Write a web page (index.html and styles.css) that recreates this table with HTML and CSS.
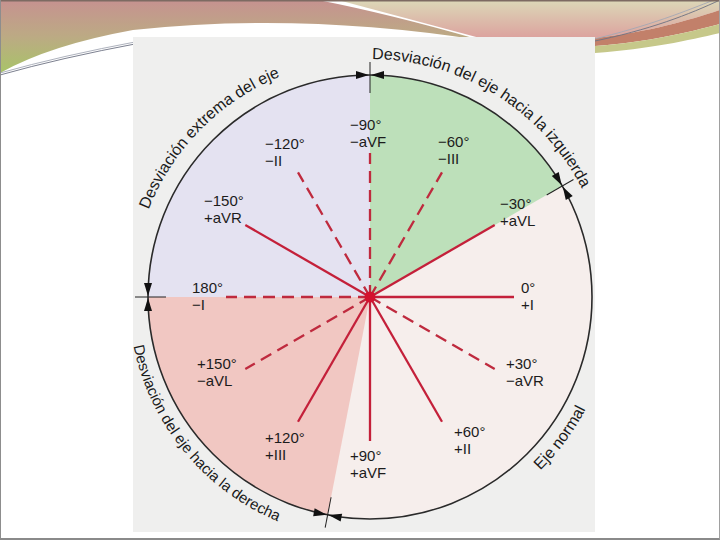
FILE: index.html
```html
<!DOCTYPE html>
<html lang="es">
<head>
<meta charset="utf-8">
<title>Eje eléctrico</title>
<link rel="stylesheet" href="styles.css">
</head>
<body>
<div class="slide">
  <svg class="deco" width="720" height="80" viewBox="0 0 720 80" aria-hidden="true">
    <defs>
      <linearGradient id="gl" x1="0" y1="0" x2="0" y2="1">
        <stop offset="0" stop-color="#c69290"/>
        <stop offset="0.5" stop-color="#bcaa84"/>
        <stop offset="1" stop-color="#a8c468"/>
      </linearGradient>
      <linearGradient id="gr" x1="0" y1="0" x2="0" y2="1">
        <stop offset="0" stop-color="#dcd8b8"/>
        <stop offset="1" stop-color="#dca29e"/>
      </linearGradient>
    </defs>
    <path class="band-left" d="M0,0 H318 Q390,14 480,40 Q300,12 133,30 Q50,45 0,73 Z"/>
    <path class="band-right" d="M338,0 H720 V10 C690,20 650,32 595,38 L480,38 Z"/>
    <path class="band-brown" d="M595,38 C650,32 690,20 720,10 V24 C690,32 650,42 595,46 Z"/>
    <path class="band-green" d="M595,46 C650,42 690,32 720,24 V33 C690,40 650,49 595,53 Z"/>
    <path class="thin dark" d="M590,42 C650,30 690,14 720,0"/>
    <path class="thin light" d="M590,40 C650,26 688,10 714,0"/>
    <path class="thin dark" d="M0,75 Q60,58 140,43"/>
    <path class="thin light" d="M0,73 Q60,56 140,41"/>
    <rect class="topline" x="0" y="0" width="720" height="1.5"/>
  </svg>

  <div class="figure">
    <svg width="462" height="495" viewBox="133 37 462 495">
      <defs>
        <path id="arc1" d="M372.08,59 A238,238 0 0 1 593.65,215.6"/>
        <path id="arc2" d="M148.56,209.77 A238,238 0 0 1 328.67,62.62"/>
        <path id="arc3" d="M133.5,346 A243,243 0 0 0 348.82,539.08"/>
        <path id="arc4" d="M540.32,470.32 A243,243 0 0 0 603.6,364"/>
      </defs>
      <rect class="bg" x="133" y="37" width="462" height="495"/>

      <circle class="sec-pale" cx="370" cy="297" r="222"/>
      <path class="sec-lav" d="M370,297 L148,297 A222,222 0 0 1 370,75 Z"/>
      <path class="sec-green" d="M370,297 L370,75 A222,222 0 0 1 562.26,186 Z"/>
      <path class="sec-pink" d="M370,297 L327.64,514.92 A222,222 0 0 1 148,297 Z"/>
      <circle class="ring" cx="370" cy="297" r="222"/>

      <g class="solid">
        <line x1="370" y1="297" x2="514" y2="297"/>
        <line x1="370" y1="297" x2="442" y2="421.7"/>
        <line x1="370" y1="297" x2="370" y2="441"/>
        <line x1="370" y1="297" x2="298" y2="421.7"/>
        <line x1="370" y1="297" x2="245.3" y2="225"/>
        <line x1="370" y1="297" x2="494.7" y2="225"/>
      </g>
      <g class="dashed">
        <line x1="370" y1="297" x2="494.7" y2="369"/>
        <line x1="370" y1="297" x2="245.3" y2="369"/>
        <line x1="370" y1="297" x2="226" y2="297"/>
        <line x1="370" y1="297" x2="298" y2="172.3"/>
        <line x1="370" y1="297" x2="370" y2="153"/>
        <line x1="370" y1="297" x2="442" y2="172.3"/>
      </g>
      <circle class="hub" cx="370" cy="297" r="5.5"/>

      <g class="mark">
        <line x1="370" y1="62" x2="370" y2="93"/>
        <polygon points="369,75 356,71 356,79"/>
        <polygon points="371,75 384,71 384,79"/>
      </g>
      <g class="mark" transform="rotate(60 370 297)">
        <line x1="370" y1="62" x2="370" y2="93"/>
        <polygon points="369,75 356,71 356,79"/>
        <polygon points="371,75 384,71 384,79"/>
      </g>
      <g class="mark" transform="rotate(-90 370 297)">
        <line x1="370" y1="62" x2="370" y2="93"/>
        <polygon points="369,75 356,71 356,79"/>
        <polygon points="371,75 384,71 384,79"/>
      </g>
      <g class="mark" transform="rotate(191 370 297)">
        <line x1="370" y1="62" x2="370" y2="93"/>
        <polygon points="369,75 356,71 356,79"/>
        <polygon points="371,75 384,71 384,79"/>
      </g>

      <g class="lbl">
        <text x="350" y="130">−90°</text><text x="350" y="147">−aVF</text>
        <text x="265" y="149">−120°</text><text x="265" y="166">−II</text>
        <text x="438" y="147">−60°</text><text x="438" y="164">−III</text>
        <text x="204" y="206">−150°</text><text x="204" y="223">+aVR</text>
        <text x="500" y="209">−30°</text><text x="500" y="226">+aVL</text>
        <text x="192" y="293">180°</text><text x="192" y="310">−I</text>
        <text x="521" y="293">0°</text><text x="521" y="310">+I</text>
        <text x="197" y="369">+150°</text><text x="197" y="386">−aVL</text>
        <text x="506" y="369">+30°</text><text x="506" y="386">−aVR</text>
        <text x="265" y="443">+120°</text><text x="265" y="460">+III</text>
        <text x="454" y="437">+60°</text><text x="454" y="454">+II</text>
        <text x="350" y="461">+90°</text><text x="350" y="478">+aVF</text>
      </g>

      <text class="arc"><textPath href="#arc1">Desviación del eje hacia la izquierda</textPath></text>
      <text class="arc"><textPath href="#arc2">Desviación extrema del eje</textPath></text>
      <text class="arc small"><textPath href="#arc3">Desviación del eje hacia la derecha</textPath></text>
      <text class="arc"><textPath href="#arc4">Eje normal</textPath></text>
    </svg>
  </div>
</div>
</body>
</html>
```

FILE: styles.css
```css
html, body {
  margin: 0;
  padding: 0;
  background: #ffffff;
}

.slide {
  position: relative;
  width: 720px;
  height: 540px;
  box-sizing: border-box;
  overflow: hidden;
  background: #ffffff;
  border-left: 1px solid #8d8d8d;
  border-right: 1px solid #a0a0a0;
  border-bottom: 2px solid #8a8a8a;
  padding: 37px 0 0 132px;
  font-family: "Liberation Sans", Arial, sans-serif;
}

.deco {
  position: absolute;
  left: -1px;
  top: 0;
  z-index: 0;
}

.band-left { fill: url(#gl); }
.band-right { fill: url(#gr); }
.band-brown { fill: #c2806a; }
.band-green { fill: #c6c88a; }
.thin { fill: none; stroke-width: 0.9; }
.thin.dark { stroke: #6d7282; }
.thin.light { stroke: #a4a8b4; }
.topline { fill: #7d6a62; }

.figure {
  position: relative;
  z-index: 1;
  width: 462px;
  height: 495px;
}

.figure svg {
  display: block;
}

.bg { fill: #efefee; }
.sec-pale { fill: #f6eeec; }
.sec-lav { fill: #e4e2f1; }
.sec-green { fill: #bde0ba; }
.sec-pink { fill: #f1c7c2; }
.ring { fill: none; stroke: #2a2a2a; stroke-width: 1.6; }

.solid line {
  stroke: #c4203a;
  stroke-width: 2.3;
}
.dashed line {
  stroke: #bf2a3e;
  stroke-width: 2.3;
  stroke-dasharray: 12 7;
}
.hub { fill: #d3122e; }

.mark line { stroke: #222222; stroke-width: 1; }
.mark polygon { fill: #111111; }

.lbl text {
  font-family: "Liberation Sans", Arial, sans-serif;
  font-size: 15px;
  fill: #1c1c1c;
}

.arc {
  font-family: "Liberation Sans", Arial, sans-serif;
  font-size: 16px;
  fill: #1a1a1a;
}
.arc.small { font-size: 15px; }
```
